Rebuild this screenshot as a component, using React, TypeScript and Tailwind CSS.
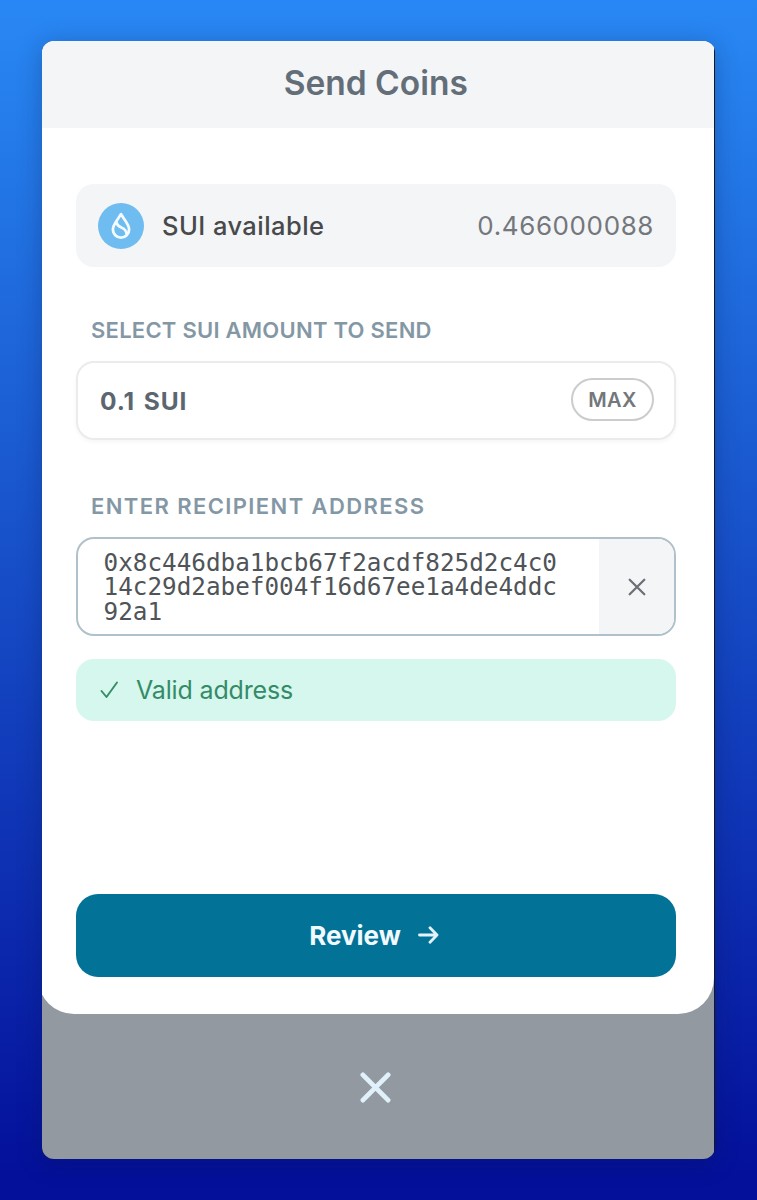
import { useState } from 'react';

const FONT = "font-['Inter',sans-serif]";

const initialAddress = '0x8c446dba1bcb67f2acdf825d2c4c014c29d2abef004f16d67ee1a4de4ddc92a1';

function SuiIcon() {
  return (
    <div className="flex h-[46px] w-[46px] shrink-0 items-center justify-center rounded-full bg-[#6fbcf0]">
      <svg width="22" height="28" viewBox="0 0 22 28" fill="none" stroke="#f4fbff" strokeWidth="2.8" strokeLinejoin="round">
        <path d="M11 2.2C9 6.2 2.9 12 2.9 17.6a8.1 8.1 0 0 0 16.2 0C19.1 12 13 6.2 11 2.2Z" />
        <path d="M6.6 10.2C7 17.2 16.6 13.8 16.6 22.4" />
      </svg>
    </div>
  );
}

function CrossIcon({ size, width, className }: { size: number; width: number; className: string }) {
  return (
    <svg width={size} height={size} viewBox="0 0 32 32" fill="none" stroke="currentColor" strokeWidth={width} strokeLinecap="round" className={className}>
      <path d="M3 3L29 29M29 3L3 29" />
    </svg>
  );
}

export default function App() {
  const [address, setAddress] = useState(initialAddress);

  return (
    <div className={`h-[1200px] w-[757px] overflow-hidden bg-[linear-gradient(to_bottom,#2987f5,#2784f0_4%,#04109a_98%)] pt-[41px] pl-[42px] ${FONT}`}>
      <div className="h-[1118px] w-[673px] overflow-hidden rounded-[12px] bg-[#15191d] pr-[1.5px] shadow-[0_4px_24px_rgba(0,20,60,0.28)]">
        <div className="flex h-full flex-col overflow-hidden bg-[#9399a0]">
          {/* Sheet runs slightly past the left edge of the window */}
          <div className="-ml-1 flex h-[973px] flex-col overflow-hidden rounded-b-[36px] bg-white">
            <header className="flex h-[87px] shrink-0 items-center justify-center bg-[#f3f5f7] pb-1">
              <h1 className="text-[33.5px] leading-10 font-semibold text-[#636e78]">Send Coins</h1>
            </header>

            <main className="flex flex-1 flex-col pt-[56px] pr-[37.5px] pb-[37px] pl-[38px]">
              {/* Balance */}
              <div className="flex h-[83px] items-center rounded-[18px] bg-[#f3f5f7] px-[22px]">
                <SuiIcon />
                <span className="ml-[18px] pt-0.5 text-[25.5px] font-medium tracking-[0.45px] text-[#48494b]">SUI available</span>
                <span className="ml-auto text-[26px] tracking-[0.6px] text-[#74777b]">0.466000088</span>
              </div>

              {/* Amount */}
              <label className="mt-[48px] ml-[15px] text-[22px] leading-[30px] font-semibold tracking-[0.25px] text-[#8497a5]">
                SELECT SUI AMOUNT TO SEND
              </label>
              <div className="mt-[16px] flex h-[79px] items-center rounded-[18px] border-2 border-[#e9ebed] pr-[20px] pl-[22px] shadow-[0_2px_4px_rgba(0,0,0,0.04)]">
                <span className="pt-0.5 text-[24.5px] font-bold tracking-[0.9px] [word-spacing:2px] text-[#5c6670]">0.1 SUI</span>
                <button className="mb-[2px] ml-auto flex h-[43px] w-[83px] items-center justify-center rounded-full border-2 border-[#cbccce] text-[20px] font-semibold tracking-[0.3px] text-[#74777b]">
                  MAX
                </button>
              </div>

              {/* Recipient */}
              <label className="mt-[51px] ml-[15px] text-[22px] leading-[30px] font-semibold tracking-[1.4px] text-[#8497a5]">
                ENTER RECIPIENT ADDRESS
              </label>
              <div className="mt-[16px] flex h-[99px] overflow-hidden rounded-[18px] border-2 border-[#b0c1cb]">
                <p className="w-[521px] pt-[12px] pr-[38px] pl-[25.5px] font-['DejaVu_Sans_Mono',monospace] text-[24.3px] leading-[24.4px] break-all text-[#4f5458]">
                  {address}
                </p>
                <button onClick={() => setAddress('')} className="flex flex-1 items-center justify-center bg-[#f3f5f7]">
                  <CrossIcon size={18} width={4} className="text-[#6c7074]" />
                </button>
              </div>

              <div className="mt-[23px] flex h-[62px] items-center rounded-[18px] bg-[#d5f7ed] pl-[24px] text-[#358b68]">
                <svg width="19" height="18" viewBox="0 0 19 18" fill="none" stroke="currentColor" strokeWidth="1.9" strokeLinecap="round" strokeLinejoin="round">
                  <path d="M1.5 10L6.5 16L17 1.5" />
                </svg>
                <span className="ml-[17px] pt-0.5 text-[25px] tracking-[-0.15px]">Valid address</span>
              </div>

              <button className="mt-auto flex h-[83px] items-center justify-center rounded-[22px] bg-[#027297] pr-[4px] text-[#f1fafe]">
                <span className="text-[26px] font-bold">Review</span>
                <svg className="mb-0.5 ml-[17px]" width="21" height="18" viewBox="0 0 21 18" fill="none" stroke="#e2f3fb" strokeWidth="2.8" strokeLinecap="round" strokeLinejoin="round">
                  <path d="M1.5 9H19M12 1.8L19 9L12 16.2" />
                </svg>
              </button>
            </main>
          </div>

          <button className="flex flex-1 items-center justify-center pt-[2px] pr-[4px]">
            <CrossIcon size={31} width={5} className="text-[#e0f1fc]" />
          </button>
        </div>
      </div>
    </div>
  );
}
